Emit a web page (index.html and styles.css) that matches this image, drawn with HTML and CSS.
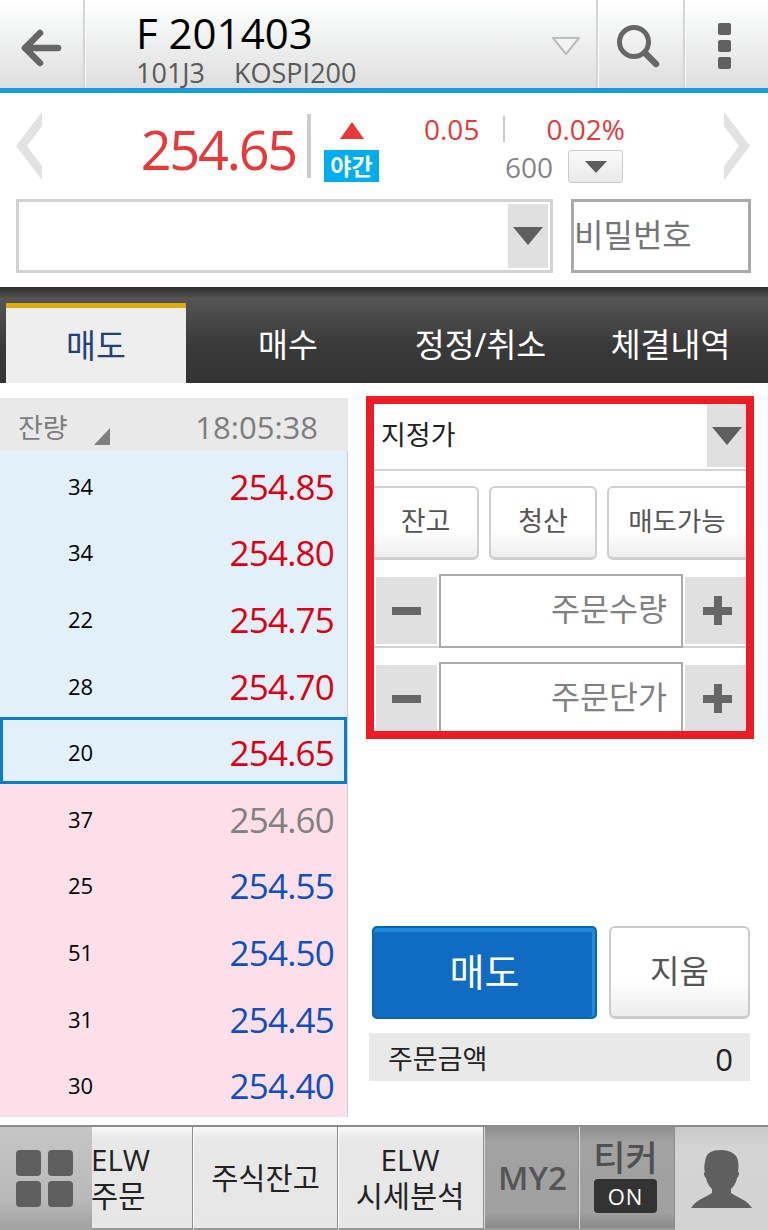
FILE: index.html
```html
<!DOCTYPE html>
<html lang="ko">
<head>
    <meta charset="UTF-8">
    <meta name="viewport" content="width=device-width, initial-scale=1.0">
    <title>F 201403 매도</title>
    <link rel="stylesheet" href="styles.css">
</head>
<body>
    <div class="app">
        <header class="top-bar">
            <div class="top-btn back-btn">
                <svg width="44" height="40" viewBox="0 0 44 40"><path d="M6 20H39M21 5L6 20L21 35" fill="none" stroke="#666" stroke-width="6.5" stroke-linecap="round" stroke-linejoin="round"/></svg>
            </div>
            <div class="title-box">
                <div>
                    <div class="title-main">F 201403</div>
                    <div class="title-sub"><span>101J3</span><span>KOSPI200</span></div>
                </div>
                <svg class="title-arrow" width="30" height="20" viewBox="0 0 30 20"><path d="M2 2H28L15 18Z" fill="#f4f4f4" stroke="#bbb" stroke-width="2" stroke-linejoin="round"/></svg>
            </div>
            <div class="top-btn search-btn">
                <svg width="46" height="46" viewBox="0 0 46 46"><circle cx="20" cy="20" r="14.5" fill="none" stroke="#666" stroke-width="5"/><path d="M31 31L42 42" stroke="#666" stroke-width="6.5" stroke-linecap="round"/></svg>
            </div>
            <div class="top-btn menu-btn">
                <span class="menu-dot"></span><span class="menu-dot"></span><span class="menu-dot"></span>
            </div>
        </header>

        <section class="summary">
            <div class="quote-row">
                <svg class="nav-arrow" width="26" height="68" viewBox="0 0 26 68"><path d="M26 0L0 34L26 68V54L11 34L26 14Z" fill="#e2e2e2"/></svg>
                <div class="price">254.65</div>
                <div class="price-sep"></div>
                <div class="session">
                    <svg width="24" height="18" viewBox="0 0 24 18"><path d="M12 0L24 17H0Z" fill="#e8383a"/></svg>
                    <div class="night-badge">야간</div>
                </div>
                <div class="changes">
                    <div class="change-line">
                        <span class="change-val">0.05</span>
                        <span class="change-sep"></span>
                        <span class="change-pct">0.02%</span>
                    </div>
                    <div class="volume-line">
                        <span class="volume">600</span>
                        <span class="small-drop"><i class="tri tri-small"></i></span>
                    </div>
                </div>
                <svg class="nav-arrow nav-next" width="26" height="68" viewBox="0 0 26 68"><path d="M0 0L26 34L0 68V54L15 34L0 14Z" fill="#e2e2e2"/></svg>
            </div>
            <div class="account-row">
                <div class="account-select"><span class="drop-box"><i class="tri"></i></span></div>
                <div class="password-box">비밀번호</div>
            </div>
        </section>

        <nav class="tabs">
            <div class="tab active">매도</div>
            <div class="tab tab-buy">매수</div>
            <div class="tab tab-edit">정정/취소</div>
            <div class="tab tab-hist">체결내역</div>
        </nav>

        <main class="content">
            <section class="book">
                <div class="book-head">
                    <span class="book-label">잔량</span>
                    <i class="sort-mark"></i>
                    <span class="book-time">18:05:38</span>
                </div>
                <div class="book-rows">
                    <div class="row ask"><span class="qty">34</span><span class="px up">254.85</span></div>
                    <div class="row ask"><span class="qty">34</span><span class="px up">254.80</span></div>
                    <div class="row ask"><span class="qty">22</span><span class="px up">254.75</span></div>
                    <div class="row ask"><span class="qty">28</span><span class="px up">254.70</span></div>
                    <div class="row ask current"><span class="qty">20</span><span class="px up">254.65</span></div>
                    <div class="row bid"><span class="qty">37</span><span class="px flat">254.60</span></div>
                    <div class="row bid"><span class="qty">25</span><span class="px down">254.55</span></div>
                    <div class="row bid"><span class="qty">51</span><span class="px down">254.50</span></div>
                    <div class="row bid"><span class="qty">31</span><span class="px down">254.45</span></div>
                    <div class="row bid"><span class="qty">30</span><span class="px down">254.40</span></div>
                </div>
            </section>

            <section class="order">
                <div class="order-box">
                    <div class="type-select">
                        <span class="type-label">지정가</span>
                        <span class="drop-box type-drop"><i class="tri"></i></span>
                    </div>
                    <div class="quick-btns">
                        <div class="quick-btn q-bal">잔고</div>
                        <div class="quick-btn q-close">청산</div>
                        <div class="quick-btn q-able">매도가능</div>
                    </div>
                    <div class="stepper">
                        <div class="step-btn"><i class="minus"></i></div>
                        <div class="step-input">주문수량</div>
                        <div class="step-btn"><i class="minus"></i><i class="plus-bar"></i></div>
                    </div>
                    <div class="stepper">
                        <div class="step-btn"><i class="minus"></i></div>
                        <div class="step-input">주문단가</div>
                        <div class="step-btn"><i class="minus"></i><i class="plus-bar"></i></div>
                    </div>
                </div>
                <div class="action-btns">
                    <div class="sell-btn">매도</div>
                    <div class="clear-btn">지움</div>
                </div>
                <div class="amount-row"><span>주문금액</span><span class="amount-val">0</span></div>
            </section>
        </main>

        <footer class="bottom-nav">
            <div class="nav-cell grid-btn">
                <span class="grid-sq"></span><span class="grid-sq"></span><span class="grid-sq"></span><span class="grid-sq"></span>
            </div>
            <div class="nav-cell elw-order"><div class="elw-text">ELW<br>주문</div></div>
            <div class="nav-cell stock-bal">주식잔고</div>
            <div class="nav-cell elw-analysis">ELW<br>시세분석</div>
            <div class="nav-cell dark-cell my-cell">MY2</div>
            <div class="nav-cell dark-cell ticker-cell">
                <div class="ticker-label">티커</div>
                <div class="on-pill">ON</div>
            </div>
            <div class="nav-cell user-cell">
                <svg width="61" height="59" viewBox="0 0 61 59"><path d="M30 0C20 0 15 3 14 12C13 17 13 19 14 22C12 22 13 26 15 28C16 33 18 36 21 39V43C15 47 5 50 0 58H61C56 50 46 47 40 43V39C43 36 45 33 46 28C48 26 49 22 47 22C48 17 48 7 43 4C39 1 35 0 30 0Z" fill="#5f5f5f"/></svg>
            </div>
        </footer>
    </div>
</body>
</html>
```

FILE: styles.css
```css
* {
    box-sizing: border-box;
}

body {
    margin: 0;
    background-color: white;
    font-family: "Open Sans", "Noto Sans CJK KR", sans-serif;
}

.app {
    width: 768px;
    height: 1230px;
    overflow: hidden;
}

/* top bar */
.top-bar {
    display: flex;
    height: 93px;
    border-bottom: 5px solid #1a9be0;
    background: linear-gradient(#ffffff, #f6f7f7 25%, #dedede);
}

.top-btn {
    display: flex;
    align-items: center;
    justify-content: center;
}

.back-btn {
    width: 85px;
    padding: 8px 1px 0 0;
    border-right: 2px solid #d4d4d4;
}

.title-box {
    display: flex;
    width: 513px;
    padding-left: 50px;
    border-left: 1px solid #fff;
    border-right: 2px solid #d4d4d4;
}

.title-main {
    margin-top: 11px;
    font-size: 42px;
    line-height: 44px;
    color: #000;
}

.title-sub {
    display: flex;
    gap: 29px;
    margin-top: 4px;
    font-size: 27px;
    line-height: 28px;
    color: #5a5a5a;
}

.title-arrow {
    margin: 36px 0 0 195px;
}

.search-btn {
    width: 87px;
    padding: 1px 8px 0 0;
    border-left: 1px solid #fff;
    border-right: 2px solid #d4d4d4;
}

.menu-btn {
    flex: 1;
    flex-direction: column;
    gap: 5px;
    padding: 4px 5px 0 0;
    border-left: 1px solid #fff;
}

.menu-dot {
    width: 13px;
    height: 12px;
    border-radius: 2px;
    background-color: #616161;
}

/* price summary */
.summary {
    height: 194px;
    padding: 0 17px 0 16px;
}

.quote-row {
    display: flex;
    height: 106px;
    padding-top: 19px;
}

.price {
    width: 254px;
    margin-top: 11px;
    text-align: right;
    font-size: 54px;
    line-height: 52px;
    letter-spacing: -2.2px;
    color: #e8383a;
}

.nav-arrow {
    flex: none;
}

.nav-next {
    margin-left: 99px;
}

.price-sep {
    width: 4px;
    height: 64px;
    margin: 2px 0 0 11px;
    background-color: #ccc;
}

.session {
    width: 55px;
    margin-left: 13px;
    text-align: center;
}

.session svg {
    display: block;
    margin: 10px auto 10px;
}

.night-badge {
    height: 32px;
    background-color: #00aeef;
    color: white;
    font-size: 23px;
    font-weight: 700;
    line-height: 32px;
}

.changes {
    width: 246px;
}

.change-line {
    display: flex;
    align-items: center;
    height: 36px;
    margin-top: -1px;
    font-size: 28px;
    line-height: 36px;
    color: #e8383a;
}

.change-val {
    margin-left: 45px;
}

.change-sep {
    width: 2px;
    height: 26px;
    margin: 0 41px 0 24px;
    background-color: #ccc;
}

.volume-line {
    display: flex;
    align-items: center;
    height: 36px;
    padding: 3px 0 0 126px;
    font-size: 28px;
    color: #858585;
}

.small-drop {
    display: flex;
    align-items: center;
    justify-content: center;
    width: 55px;
    height: 33px;
    margin-left: 15px;
    border: 1px solid #ccc;
    border-radius: 3px;
    background: linear-gradient(#fafafa, #e9e9e9);
}

.tri {
    display: block;
    width: 0;
    height: 0;
    border-left: 15px solid transparent;
    border-right: 15px solid transparent;
    border-top: 18px solid #5e5e5e;
}

.tri-small {
    border-left-width: 11px;
    border-right-width: 11px;
    border-top-width: 12px;
}

.account-row {
    display: flex;
    gap: 18px;
}

.account-select {
    display: flex;
    justify-content: flex-end;
    width: 537px;
    height: 74px;
    padding: 2px 2px 2px 0;
    border: 3px solid #d2d2d2;
}

.drop-box {
    display: flex;
    align-items: center;
    justify-content: center;
    width: 40px;
    background-color: #e0e0e0;
}

.password-box {
    width: 180px;
    height: 74px;
    border: 3px solid #aaa;
    font-size: 32px;
    line-height: 66px;
    color: #757575;
}

/* tabs */
.tabs {
    display: flex;
    height: 96px;
    padding: 16px 0 0 6px;
    background: linear-gradient(#2c2c2c, #555 12%, #3a3a3a 60%, #333);
}

.tab {
    flex: none;
    height: 80px;
    font-size: 32.5px;
    line-height: 84px;
    text-align: center;
    color: white;
}

.tab.active {
    width: 180px;
    border-top: 5px solid #e0a90f;
    background-color: #eeeeee;
    color: #243f73;
    line-height: 76px;
}

.tab-buy {
    width: 204px;
}

.tab-edit {
    width: 181px;
}

.tab-hist {
    width: 199px;
}

/* order book + form */
.content {
    display: flex;
    height: 734px;
}

.book {
    width: 348px;
    padding-top: 15px;
}

.book-head {
    display: flex;
    align-items: center;
    height: 53px;
    padding: 5px 30px 0 18px;
    background-color: #e9e9e9;
    color: #7d7d7d;
}

.book-label {
    font-size: 27px;
    line-height: 1;
}

.sort-mark {
    width: 0;
    height: 0;
    margin: 19px 0 0 26px;
    border-left: 16px solid transparent;
    border-bottom: 17px solid #808080;
}

.book-time {
    margin-left: auto;
    font-size: 31px;
    line-height: 1;
}

.book-rows {
    border-right: 1px solid #c8ccd4;
}

.row {
    display: flex;
    align-items: center;
    justify-content: space-between;
    height: 66.6px;
    padding: 3px 13px 0 68px;
}

.ask {
    background-color: #e2f0fa;
}

.bid {
    background-color: #fddfe9;
}

.current {
    outline: 3px solid #0c7ccd;
    outline-offset: -3px;
}

.qty {
    font-size: 22px;
    color: #000;
}

.px {
    margin-top: 1px;
    font-size: 35px;
    letter-spacing: -0.8px;
}

.up {
    color: #e00012;
}

.flat {
    color: #808080;
}

.down {
    color: #0f4fc4;
}

.order {
    width: 420px;
    padding: 13px 18px 0 18px;
}

.order-box {
    width: 388px;
    height: 343px;
    overflow: hidden;
    border: 8px solid #ed1c24;
}

.type-select {
    display: flex;
    justify-content: space-between;
    height: 67px;
    padding-bottom: 2px;
    border-bottom: 2px solid #d2d2d2;
}

.type-label {
    padding-left: 7px;
    font-size: 27px;
    line-height: 62px;
    color: #222;
}

.type-drop {
    width: 39px;
}

.quick-btns {
    display: flex;
    height: 74px;
    margin-top: 15px;
}

.quick-btn {
    flex: none;
    height: 74px;
    border: 2px solid #cfcfcf;
    border-bottom-width: 3px;
    border-radius: 6px;
    background: linear-gradient(#fff 60%, #eeeeee);
    font-size: 27px;
    line-height: 66px;
    text-align: center;
    color: #555;
}

.q-bal {
    width: 105px;
    border-left: none;
    border-radius: 0 6px 6px 0;
}

.q-close {
    width: 108px;
    margin-left: 10px;
}

.q-able {
    width: 145px;
    margin-left: 10px;
    padding-right: 5px;
    font-size: 26.5px;
}

.stepper {
    display: flex;
    height: 74px;
    margin-top: 14px;
    border-bottom: 2px solid #d2d2d2;
}

.step-btn {
    position: relative;
    display: flex;
    align-items: center;
    justify-content: center;
    width: 61px;
    height: 67px;
    margin: 3px 0 0 2px;
    background-color: #e0e0e0;
}

.step-btn:last-child {
    padding-left: 4px;
}

.step-input {
    width: 244px;
    height: 74px;
    margin-left: 2px;
    padding-right: 14px;
    border: 2px solid #aaa;
    background-color: white;
    font-size: 31.5px;
    line-height: 66px;
    text-align: right;
    color: #808080;
}

.minus {
    display: block;
    width: 29px;
    height: 8px;
    background-color: #666;
}

.plus-bar {
    position: absolute;
    top: 19px;
    left: 29px;
    width: 8px;
    height: 29px;
    background-color: #666;
}

.action-btns {
    display: flex;
    gap: 12px;
    margin: 187px 0 0 6px;
}

.sell-btn {
    width: 225px;
    height: 93px;
    border: 2px solid #0a65ac;
    border-radius: 5px;
    box-shadow: inset 0 4px #1b8bdc, inset -3px 0 #1b8bdc;
    background-color: #0f6cc2;
    color: white;
    font-size: 38px;
    line-height: 86px;
    text-align: center;
}

.clear-btn {
    width: 141px;
    height: 93px;
    border: 2px solid #cbcbcb;
    border-bottom-width: 3px;
    border-radius: 6px;
    background: linear-gradient(#fff 60%, #ececec);
    color: #555;
    font-size: 32px;
    line-height: 86px;
    text-align: center;
}

.amount-row {
    display: flex;
    justify-content: space-between;
    width: 381px;
    height: 48px;
    margin: 14px 0 0 3px;
    padding: 0 17px 0 19px;
    background-color: #e9e9e9;
    font-size: 27px;
    line-height: 52px;
    color: #222;
}

.amount-val {
    font-size: 31px;
}

/* bottom nav */
.bottom-nav {
    display: flex;
    height: 105px;
    margin-top: 8px;
    border-top: 2px solid #8c8c8c;
}

.nav-cell {
    display: flex;
    flex: none;
    align-items: center;
    justify-content: center;
    height: 103px;
    border-right: 1px solid #8c8c8c;
    border-bottom: 2px solid #9a9a9a;
    background: linear-gradient(#f8f8f8, #e8e8e8 12%, #e6e6e6);
    font-size: 29.5px;
    line-height: 36px;
    text-align: center;
    color: #222;
}

.grid-btn {
    flex-wrap: wrap;
    align-content: center;
    justify-content: flex-start;
    gap: 5px 7px;
    width: 92px;
    padding: 0 19px 0 16px;
    border: none;
    background: linear-gradient(#c6c6c6, #b9b9b9 70%, #a0a0a0);
}

.grid-sq {
    width: 25px;
    height: 26px;
    border-radius: 4px;
    background-color: #5f5f5f;
}

.elw-order {
    justify-content: flex-start;
    width: 101px;
    overflow: hidden;
}

.elw-text {
    margin-left: -1px;
    text-align: left;
}

.stock-bal {
    width: 145px;
    border-left: 1px solid #fff;
}

.elw-analysis {
    width: 146px;
    padding-right: 2px;
    border-left: 1px solid #fff;
}

.dark-cell {
    background: linear-gradient(#8f8f8f, #a2a2a2 15%, #a0a0a0 85%, #8a8a8a);
}

.my-cell {
    width: 95px;
    padding-left: 2px;
    font-size: 33px;
    font-weight: 600;
    color: #555;
    border-left: 1px solid #ddd;
}

.ticker-cell {
    flex-direction: column;
    width: 96px;
    padding-right: 3px;
    border-left: 1px solid #ddd;
}

.ticker-label {
    margin-top: -4px;
    font-size: 35px;
    font-weight: 500;
    line-height: 38px;
    color: #505050;
}

.on-pill {
    width: 63px;
    height: 34px;
    margin-top: 2px;
    border-radius: 4px;
    background-color: #333;
    color: white;
    font-size: 22px;
    font-weight: 500;
    letter-spacing: 1px;
    line-height: 34px;
}

.user-cell {
    flex: 1;
    border: none;
    padding-top: 1px;
    background: linear-gradient(#c8c8c8, #d4d4d4 20%, #d2d2d2);
}
```
